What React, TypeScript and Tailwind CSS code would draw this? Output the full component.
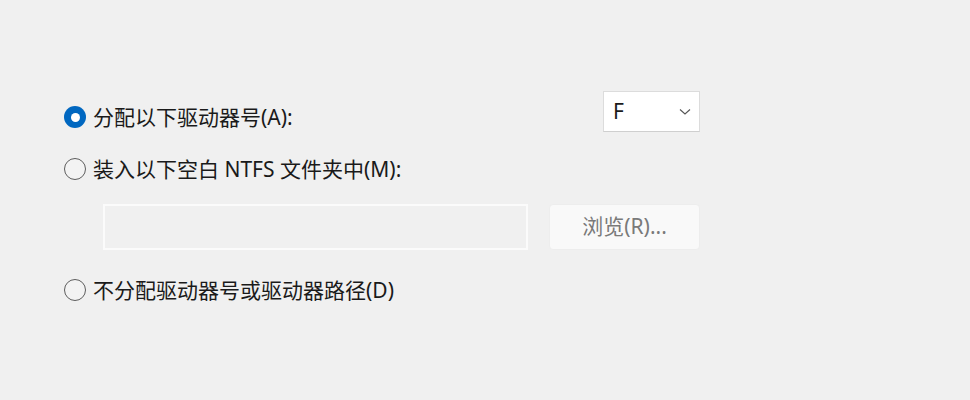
import React, { useState } from 'react'

const font = { fontFamily: '"Noto Sans", "Noto Sans CJK SC", sans-serif' }

const Radio = ({ checked }: { checked: boolean }) =>
  checked ? (
    <span className="flex h-[22px] w-[22px] shrink-0 items-center justify-center rounded-full bg-[#0067c0]">
      <span className="h-[9px] w-[9px] rounded-full bg-white" />
    </span>
  ) : (
    <span className="h-[22px] w-[22px] shrink-0 rounded-full border-[1.5px] border-[#5d5d5d] bg-[#f3f3f3]" />
  )

const Option = ({
  label,
  checked,
  onClick,
  className = '',
}: {
  label: string
  checked: boolean
  onClick: () => void
  className?: string
}) => (
  <label
    onClick={onClick}
    className={`flex h-[28px] cursor-default items-center gap-[7px] text-[21px] leading-[28px] text-[#1a1a1a] ${className}`}
  >
    <Radio checked={checked} />
    <span>{label}</span>
  </label>
)

export default function App() {
  const [mode, setMode] = useState(0)

  return (
    <div className="h-[400px] w-[970px] bg-[#f0f0f0]" style={font}>
      <div className="flex w-[700px] flex-col pl-[64px] pt-[91px]">
        <div className="flex items-start justify-between">
          <Option
            label="分配以下驱动器号(A):"
            checked={mode === 0}
            onClick={() => setMode(0)}
            className="mt-[12px]"
          />
          <div className="flex h-[41px] w-[97px] items-center justify-between border border-[#dcdcdc] border-b-[#cfcfcf] bg-white pl-[9px] pr-[8px]">
            <span className="text-[21px] text-[#1a1a1a]">F</span>
            <svg width="12" height="8" viewBox="0 0 12 8" fill="none">
              <path d="M1 1.5 L6 6 L11 1.5" stroke="#555" strokeWidth="1.1" />
            </svg>
          </div>
        </div>

        <Option
          label="装入以下空白 NTFS 文件夹中(M):"
          checked={mode === 1}
          onClick={() => setMode(1)}
          className="mt-[23px]"
        />

        <div className="ml-[39px] mt-[21px] flex items-center justify-between">
          <div className="h-[46px] w-[425px] border-2 border-[#fbfbfb] bg-[#f0f0f0]" />
          <button className="h-[46px] w-[151px] rounded-[4px] border border-[#ededed] bg-[#f9f9f9] text-[21px] text-[#7a7a7a]">
            浏览(R)...
          </button>
        </div>

        <Option
          label="不分配驱动器号或驱动器路径(D)"
          checked={mode === 2}
          onClick={() => setMode(2)}
          className="mt-[26px]"
        />
      </div>
    </div>
  )
}
